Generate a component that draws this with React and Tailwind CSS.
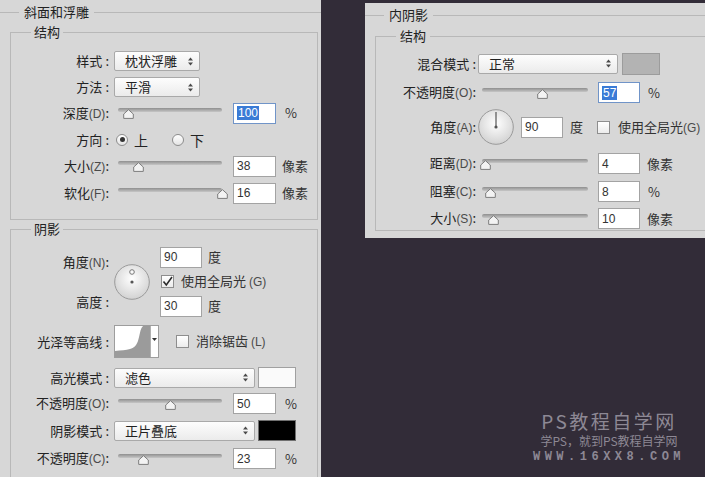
import React from "react";

const cjk = "font-['Noto_Sans_CJK_SC',sans-serif]";
const num = "font-['Liberation_Sans',Arial,sans-serif]";

function Label({ text, hint, w = "w-[98px]" }) {
  return (
    <div className={`${w} shrink-0 text-right text-[13px] leading-[16px] text-[#222]`}>
      {text}
      {hint && <span className={`text-[#4a4a4a] text-[12px] ${num}`}>{hint}</span>}
      <span className={hint ? "" : "ml-[3px]"}>:</span>
    </div>
  );
}

function UpDown() {
  return (
    <svg width="5" height="9" viewBox="0 0 5 9">
      <path d="M0 3.5 L2.5 0.5 L5 3.5 Z" fill="#4a4a4a" />
      <path d="M0 5.5 L2.5 8.5 L5 5.5 Z" fill="#4a4a4a" />
    </svg>
  );
}

function Select({ value, w }) {
  return (
    <div className={`${w} h-[20px] shrink-0 rounded-[2px] border border-[#a9a9a9] bg-linear-to-b from-[#fdfdfd] to-[#ebebeb] flex items-center justify-between pl-[10px] pr-[6px] text-[13px] leading-[16px] text-[#222]`}>
      <span>{value}</span>
      <UpDown />
    </div>
  );
}

function Slider({ pos, w }) {
  return (
    <div className={`${w} relative h-[14px] shrink-0`}>
      <div className="absolute left-0 right-0 top-[2px] h-[4px] rounded-full bg-linear-to-b from-[#8f8f8f] to-[#c6c6c6]" />
      <svg className="absolute top-[3px]" style={{ left: pos - 5 }} width="11" height="10" viewBox="0 0 11 10">
        <path d="M5.5 0.7 L10.3 5 L10.3 9.4 L0.7 9.4 L0.7 5 Z" fill="#f3f3f3" stroke="#7c7c7c" strokeWidth="1" />
      </svg>
    </div>
  );
}

function Field({ value, selected, w = "w-[43px]" }) {
  return (
    <div className={`${w} h-[21px] shrink-0 border bg-white flex items-center pl-[3px] text-[12px] ${num} text-[#333] ${selected ? "border-[#7094c8]" : "border-[#a3a3a3]"}`}>
      {selected ? <span className="bg-[#3a7bd6] text-white leading-[14px] px-[1px]">{value}</span> : value}
    </div>
  );
}

function Unit({ children, className = "" }) {
  return <span className={`text-[13px] leading-[16px] text-[#333] ${className}`}>{children}</span>;
}

function Radio({ on }) {
  return (
    <div className="w-[12px] h-[12px] shrink-0 rounded-full border border-[#8c8c8c] bg-linear-to-b from-white to-[#e4e4e4] flex items-center justify-center">
      {on && <div className="w-[5px] h-[5px] rounded-full bg-[#333]" />}
    </div>
  );
}

function Check({ on }) {
  return (
    <div className="w-[13px] h-[13px] shrink-0 border border-[#8e8e8e] bg-linear-to-b from-white to-[#ececec] flex items-center justify-center">
      {on && (
        <svg width="11" height="11" viewBox="0 0 11 11">
          <path d="M1.5 5.5 L4.3 9 L10 1" fill="none" stroke="#2b2b2b" strokeWidth="1.6" />
        </svg>
      )}
    </div>
  );
}

function Dial({ line }) {
  return (
    <svg width="36" height="36" viewBox="0 0 36 36" className="shrink-0">
      <defs>
        <radialGradient id={line ? "dg2" : "dg1"} cx="50%" cy="40%" r="60%">
          <stop offset="0%" stopColor="#ffffff" />
          <stop offset="100%" stopColor="#d2d2d2" />
        </radialGradient>
      </defs>
      <circle cx="18" cy="18" r="17.3" fill={`url(#${line ? "dg2" : "dg1"})`} stroke="#9a9a9a" strokeWidth="1" />
      {line ? (
        <path d="M18 18 L18 3" stroke="#555" strokeWidth="1.2" />
      ) : (
        <circle cx="18" cy="8" r="2.3" fill="#fafafa" stroke="#777" strokeWidth="1" />
      )}
      <circle cx="18" cy="18" r="1.6" fill="#555" />
    </svg>
  );
}

function Contour() {
  return (
    <div className="flex h-[33px] border border-[#9d9d9d] bg-white shrink-0">
      <svg width="35" height="31" viewBox="0 0 35 31">
        <path d="M0 31 L0 25 C6 24.5 11 24 15 23 C19 22 21 20 23 15 C24.5 10 25 5 26.5 2 L28 0 L35 0 L35 31 Z" fill="#9b9b9b" />
      </svg>
      <div className="w-[8px] border-l border-[#b0b0b0] flex justify-center pt-[12px]">
        <svg width="5" height="3" viewBox="0 0 5 3">
          <path d="M0 0 L5 0 L2.5 3 Z" fill="#333" />
        </svg>
      </div>
    </div>
  );
}

function Legend({ children, className }) {
  return <legend className={`text-[13px] leading-[16px] text-[#222] ${className}`}>{children}</legend>;
}

function Row({ h, className = "", children }) {
  return <div className={`flex items-center ${h} ${className}`}>{children}</div>;
}

function LeftPanel() {
  return (
    <div className="w-[321px] h-[477px] shrink-0 bg-[#d7d7d7] pt-[4px] overflow-hidden">
      <fieldset className="border-t border-[#b8b8b8] h-[480px]">
        <Legend className="ml-[19px] px-[5px]">斜面和浮雕</Legend>

        <fieldset className="ml-[10px] mr-[3px] mt-[4px] border border-[#b8b8b8] pt-[8px] pb-[12px]">
          <Legend className="ml-[20px] px-[3px]">结构</Legend>
          <Row h="h-[26px]">
            <Label text="样式" />
            <div className="ml-[5px]"><Select value="枕状浮雕" w="w-[86px]" /></div>
          </Row>
          <Row h="h-[26px]">
            <Label text="方法" />
            <div className="ml-[5px]"><Select value="平滑" w="w-[86px]" /></div>
          </Row>
          <Row h="h-[26px]">
            <Label text="深度" hint="(D)" />
            <div className="ml-[9px]"><Slider pos={10} w="w-[104px]" /></div>
            <div className="ml-[11px]"><Field value="100" selected /></div>
            <Unit className="ml-[9px]">%</Unit>
          </Row>
          <Row h="h-[27px]">
            <Label text="方向" />
            <div className="ml-[7px]"><Radio on /></div>
            <span className="ml-[6px] text-[14px] leading-[16px]">上</span>
            <div className="ml-[24px]"><Radio /></div>
            <span className="ml-[6px] text-[14px] leading-[16px]">下</span>
          </Row>
          <Row h="h-[26px]">
            <Label text="大小" hint="(Z)" />
            <div className="ml-[9px]"><Slider pos={20} w="w-[104px]" /></div>
            <div className="ml-[11px]"><Field value="38" /></div>
            <Unit className="ml-[6px]">像素</Unit>
          </Row>
          <Row h="h-[28px]">
            <Label text="软化" hint="(F)" />
            <div className="ml-[9px]"><Slider pos={104} w="w-[104px]" /></div>
            <div className="ml-[11px]"><Field value="16" /></div>
            <Unit className="ml-[6px]">像素</Unit>
          </Row>
        </fieldset>

        <fieldset className="ml-[10px] mr-[3px] mt-[1px] border border-[#b8b8b8] pt-[8px] h-[270px]">
          <Legend className="ml-[20px] px-[3px]">阴影</Legend>
          <div className="flex h-[73px]">
            <div className="w-[98px] shrink-0 flex flex-col justify-between pt-[9px] pb-[8px]">
              <Label text="角度" hint="(N)" />
              <Label text="高度" />
            </div>
            <div className="ml-[5px] flex items-center"><Dial /></div>
            <div className="ml-[10px] flex flex-col">
              <Row h="h-[24px]">
                <Field value="90" w="w-[42px]" />
                <Unit className="ml-[6px]">度</Unit>
              </Row>
              <Row h="h-[25px]">
                <div className="ml-[1px]"><Check on /></div>
                <Unit className="ml-[7px]">使用全局光 <span className={`text-[#4a4a4a] text-[12px] ${num}`}>(G)</span></Unit>
              </Row>
              <Row h="h-[24px]">
                <Field value="30" w="w-[42px]" />
                <Unit className="ml-[6px]">度</Unit>
              </Row>
            </div>
          </div>
          <Row h="h-[33px]" className="mt-[7px]">
            <Label text="光泽等高线" />
            <div className="ml-[5px]"><Contour /></div>
            <div className="ml-[17px]"><Check /></div>
            <Unit className="ml-[7px]">消除锯齿 <span className={`text-[#4a4a4a] text-[12px] ${num}`}>(L)</span></Unit>
          </Row>
          <Row h="h-[21px]" className="mt-[9px]">
            <Label text="高光模式" />
            <div className="ml-[5px]"><Select value="滤色" w="w-[141px]" /></div>
            <div className="ml-[3px] w-[38px] h-[21px] border border-[#a0a0a0] bg-[#fafafa]" />
          </Row>
          <Row h="h-[21px]" className="mt-[5px]">
            <Label text="不透明度" hint="(O)" />
            <div className="ml-[9px]"><Slider pos={52} w="w-[104px]" /></div>
            <div className="ml-[11px]"><Field value="50" /></div>
            <Unit className="ml-[9px]">%</Unit>
          </Row>
          <Row h="h-[21px]" className="mt-[6px]">
            <Label text="阴影模式" />
            <div className="ml-[5px]"><Select value="正片叠底" w="w-[141px]" /></div>
            <div className="ml-[3px] w-[38px] h-[21px] border border-[#707070] bg-black" />
          </Row>
          <Row h="h-[21px]" className="mt-[7px]">
            <Label text="不透明度" hint="(C)" />
            <div className="ml-[9px]"><Slider pos={25} w="w-[104px]" /></div>
            <div className="ml-[11px]"><Field value="23" /></div>
            <Unit className="ml-[9px]">%</Unit>
          </Row>
        </fieldset>
      </fieldset>
    </div>
  );
}

function RightColumn() {
  return (
    <div className="flex-1 flex flex-col pl-[44px] pt-[3px] overflow-hidden">
      <div className="w-[360px] h-[235px] shrink-0 bg-[#d7d7d7] pt-[4px]">
        <fieldset className="border-t border-[#b8b8b8]">
          <Legend className="ml-[19px] px-[5px]">内阴影</Legend>
          <fieldset className="ml-[10px] mt-[5px] border border-[#b8b8b8] pt-[9px] h-[203px]">
            <Legend className="ml-[20px] px-[4px]">结构</Legend>
            <Row h="h-[21px]">
              <Label text="混合模式" w="w-[100px]" />
              <div className="ml-[2px]"><Select value="正常" w="w-[140px]" /></div>
              <div className="ml-[4px] w-[38px] h-[22px] border border-[#9c9c9c] bg-[#b3b3b3]" />
            </Row>
            <Row h="h-[21px]" className="mt-[8px]">
              <Label text="不透明度" hint="(O)" w="w-[100px]" />
              <div className="ml-[6px]"><Slider pos={60} w="w-[106px]" /></div>
              <div className="ml-[10px]"><Field value="57" selected w="w-[42px]" /></div>
              <Unit className="ml-[8px]">%</Unit>
            </Row>
            <Row h="h-[36px]" className="mt-[6px]">
              <Label text="角度" hint="(A)" w="w-[100px]" />
              <div className="ml-[2px]"><Dial line /></div>
              <div className="ml-[7px]"><Field value="90" w="w-[42px]" /></div>
              <Unit className="ml-[7px]">度</Unit>
              <div className="ml-[14px]"><Check /></div>
              <Unit className="ml-[8px]">使用全局光<span className={`text-[#4a4a4a] text-[12px] ${num}`}>(G)</span></Unit>
            </Row>
            <Row h="h-[21px]" className="mt-[8px]">
              <Label text="距离" hint="(D)" w="w-[100px]" />
              <div className="ml-[6px]"><Slider pos={3} w="w-[106px]" /></div>
              <div className="ml-[10px]"><Field value="4" w="w-[42px]" /></div>
              <Unit className="ml-[7px]">像素</Unit>
            </Row>
            <Row h="h-[21px]" className="mt-[7px]">
              <Label text="阻塞" hint="(C)" w="w-[100px]" />
              <div className="ml-[6px]"><Slider pos={8} w="w-[106px]" /></div>
              <div className="ml-[10px]"><Field value="8" w="w-[42px]" /></div>
              <Unit className="ml-[8px]">%</Unit>
            </Row>
            <Row h="h-[21px]" className="mt-[6px]">
              <Label text="大小" hint="(S)" w="w-[100px]" />
              <div className="ml-[6px]"><Slider pos={11} w="w-[106px]" /></div>
              <div className="ml-[10px]"><Field value="10" w="w-[42px]" /></div>
              <Unit className="ml-[7px]">像素</Unit>
            </Row>
          </fieldset>
        </fieldset>
      </div>

      <div className="mt-[172px] ml-[164px] w-[160px] flex flex-col items-center text-[#8d8894]">
        <div className="text-[19px] leading-[22px] tracking-[2.5px]">PS教程自学网</div>
        <div className="mt-[2px] text-[12px] leading-[14px]">学PS，就到PS教程自学网</div>
        <div className={`mt-[2px] text-[12px] leading-[14px] tracking-[4.5px] font-bold font-['Liberation_Mono',monospace]`}>WWW.16XX8.COM</div>
      </div>
    </div>
  );
}

export default function App() {
  return (
    <div className={`flex w-[705px] h-[477px] overflow-hidden bg-[#322c38] ${cjk} text-[#232323]`}>
      <LeftPanel />
      <RightColumn />
    </div>
  );
}
